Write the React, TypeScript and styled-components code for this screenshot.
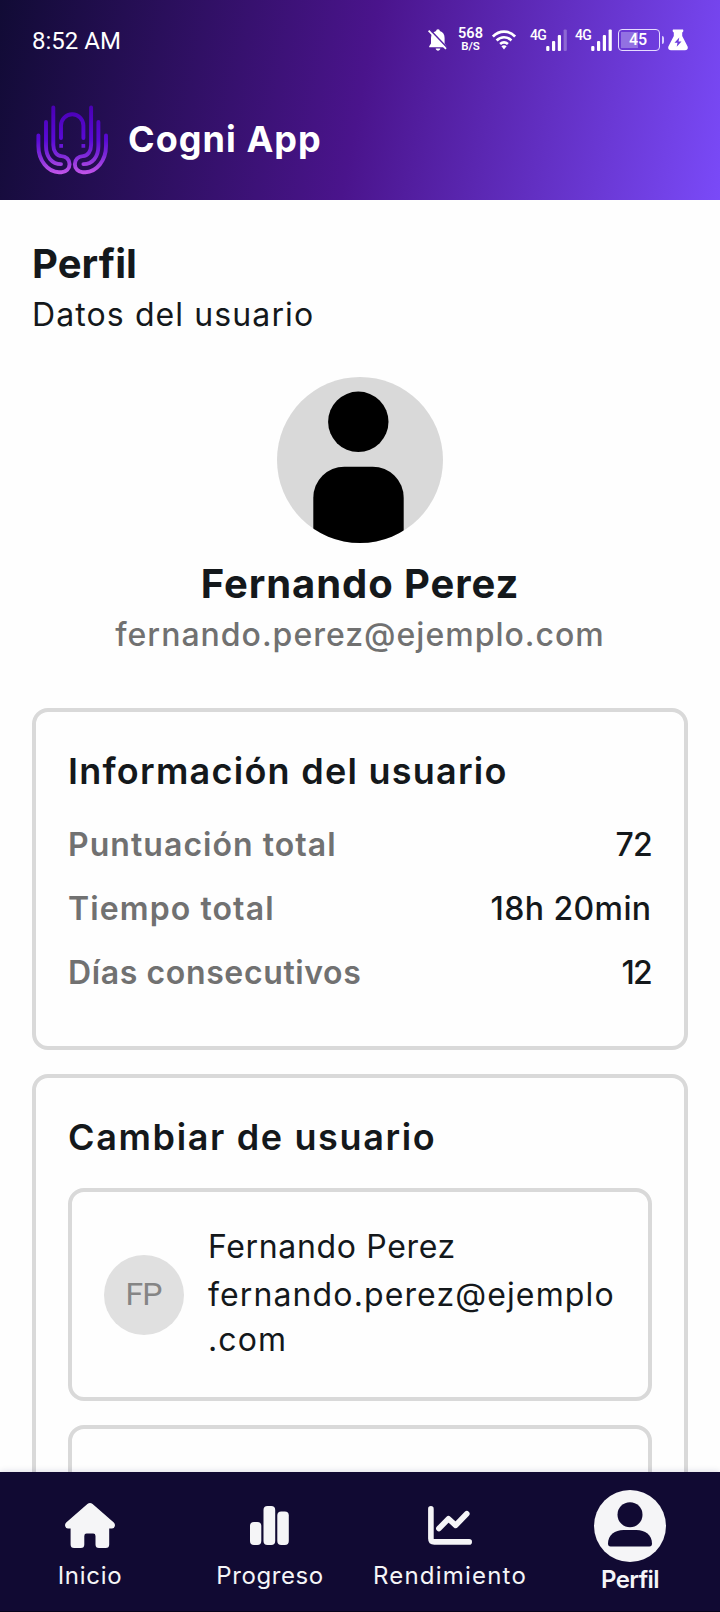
import React from 'react';
import styled, { createGlobalStyle } from 'styled-components';

const GlobalStyle = createGlobalStyle`
  * { box-sizing: border-box; }
  body {
    margin: 0;
    background: #fefefe;
    font-family: Inter, sans-serif;
    color: #14181b;
  }
  svg { display: block; flex: none; }
`;

const Screen = styled.div`
  display: flex;
  flex-direction: column;
  height: 100vh;
  overflow: hidden;
`;

const Header = styled.header`
  flex: none;
  height: 200px;
  background: linear-gradient(101deg, #110b35 0%, #4a148c 50%, #7a4af8 100%);
  color: #fff;
`;

const StatusBar = styled.div`
  display: flex;
  align-items: center;
  height: 80px;
  padding: 0 32px;
  font-family: Roboto, sans-serif;
`;

const Clock = styled.span`
  flex: 1;
  font-size: 24px;
  line-height: 28px;
  padding-top: 1px;
`;

const NetSpeed = styled.div`
  display: flex;
  flex-direction: column;
  width: 25px;
  margin: 0 9px 0 10px;
  text-align: center;
  font-weight: 600;
  font-size: 14.5px;
  line-height: 12px;
  padding-bottom: 1px;
`;

const NetUnit = styled.span`
  font-size: 11.5px;
  line-height: 12px;
`;

const Signal = styled.div<{ $gap: number }>`
  display: flex;
  width: 37px;
  height: 22px;
  margin-left: ${(p) => p.$gap}px;
  font-size: 14px;
  font-weight: 500;
  line-height: 12px;
  letter-spacing: -0.7px;

  span { width: 16px; }
`;

const Battery = styled.div`
  display: flex;
  align-items: center;
  margin: 0 4px 0 6px;
`;

const BatteryCase = styled.div`
  width: 42px;
  height: 22px;
  padding-right: 2px;
  border: 1.5px solid #e6dcff;
  border-radius: 4px;
  background: linear-gradient(#9271e2, #9271e2) 2px 2px / 17px 16px no-repeat;
  font-size: 16px;
  font-weight: 500;
  line-height: 20px;
  text-align: center;
`;

const BatteryNub = styled.div`
  width: 2px;
  height: 8px;
  margin-left: 2px;
  border-radius: 0 2px 2px 0;
  background: #d9ccff;
`;

const Brand = styled.div`
  display: flex;
  gap: 16px;
  padding: 20px 32px;
`;

const BrandName = styled.div`
  padding-top: 12px;
  font-size: 36px;
  line-height: 54px;
  font-weight: 700;
  letter-spacing: 1.04px;
`;

const Main = styled.main`
  flex: 1;
  min-height: 0;
  overflow: hidden;
  padding: 37px 32px 0;
`;

const Heading = styled.h1<{ $spacing: number }>`
  margin: 0;
  font-size: 40px;
  line-height: 54px;
  font-weight: 700;
  letter-spacing: ${(p) => p.$spacing}px;
`;

const Subtitle = styled.p`
  margin: 0;
  font-size: 32px;
  line-height: 48px;
  letter-spacing: 1.1px;
`;

const Identity = styled.section`
  display: flex;
  flex-direction: column;
  align-items: center;
  padding: 38px 0 49px;

  svg { margin-bottom: 14px; }
`;

const Email = styled.p`
  margin: 0;
  font-size: 32px;
  line-height: 48px;
  font-weight: 500;
  letter-spacing: 1px;
  color: #717171;
`;

const Card = styled.section`
  margin-bottom: 24px;
  padding: 32px 32px 41px;
  border: 4px solid #d9d9d9;
  border-radius: 16px;
`;

const CardTitle = styled.h2<{ $spacing: number; $below: number }>`
  margin: 0 0 ${(p) => p.$below}px;
  font-size: 36px;
  line-height: 54px;
  font-weight: 600;
  letter-spacing: ${(p) => p.$spacing}px;
`;

const StatRow = styled.div`
  display: flex;
  justify-content: space-between;
  align-items: center;
  height: 64px;
  font-size: 32px;
  line-height: 48px;
`;

const StatLabel = styled.span<{ $spacing: number }>`
  font-weight: 600;
  letter-spacing: ${(p) => p.$spacing}px;
  color: #717171;
`;

const StatValue = styled.span<{ $spacing: number; $shift: number }>`
  font-weight: 500;
  letter-spacing: ${(p) => p.$spacing}px;
  margin-right: ${(p) => p.$shift}px;
`;

const UserCard = styled.div`
  display: flex;
  align-items: center;
  gap: 24px;
  margin-bottom: 24px;
  padding: 32px;
  border: 4px solid #d9d9d9;
  border-radius: 16px;
  font-size: 32px;
`;

const Initials = styled.div`
  flex: none;
  width: 80px;
  height: 80px;
  padding-right: 1px;
  border-radius: 50%;
  background: #e0e0e0;
  color: #858585;
  font-family: Roboto, sans-serif;
  line-height: 78px;
  letter-spacing: -1px;
  text-align: center;
`;

const UserText = styled.div`
  flex: 1;
  min-width: 0;
  padding-bottom: 3px;
`;

const UserName = styled.div<{ $spacing: number; $line: number }>`
  line-height: ${(p) => p.$line}px;
  margin-bottom: 2px;
  letter-spacing: ${(p) => p.$spacing}px;
`;

const UserEmail = styled.div`
  line-height: 45px;
  letter-spacing: 1.12px;
  overflow-wrap: anywhere;
`;

const Nav = styled.nav`
  position: relative;
  flex: none;
  display: flex;
  align-items: center;
  height: 140px;
  padding: 18px 0 13px;
  background: #110a33;
  border-bottom: 1px solid #06031c;
  box-shadow: 0 -1px 6px rgba(17, 10, 80, 0.12);
  color: #f5f5f7;
`;

const NavItem = styled.a<{ $spacing: number; $active?: boolean }>`
  flex: 1;
  display: flex;
  flex-direction: column;
  align-items: center;
  font-size: 24px;
  line-height: 36px;
  font-weight: ${(p) => (p.$active ? 600 : 400)};
  letter-spacing: ${(p) => p.$spacing}px;

  svg { margin: ${(p) => (p.$active ? 0 : 8)}px 0; }
`;

const Logo = () => (
  <svg width="80" height="80" viewBox="0 0 80 80" fill="none" stroke="url(#logo)" strokeWidth="3.9" strokeLinecap="round">
    <defs>
      <linearGradient id="logo" gradientUnits="userSpaceOnUse" x1="0" y1="6" x2="0" y2="74">
        <stop offset="0" stopColor="#4a00b4" />
        <stop offset="0.5" stopColor="#5a0ad6" />
        <stop offset="0.72" stopColor="#7c28d8" />
        <stop offset="1" stopColor="#c355ea" />
      </linearGradient>
    </defs>
    <path d="M6.400 35.500V46C6.400 60.500 16 72.200 27 72.200H29.500A8 8 0 0 0 29.500 56.100C24.800 56.100 21.300 51 21.300 45V7.500" />
    <path d="M14 22V46C14 57 20 64.100 29 64.100" />
    <path d="M74 35.500V46C74 60.500 64.400 72.200 53.400 72.200H50.900A8 8 0 0 1 50.900 56.100C55.600 56.100 59.100 51 59.100 45V7.500" />
    <path d="M66.400 22V46C66.400 57 60.400 64.100 51.400 64.100" />
    <path d="M29 38V25.500A11.200 11.200 0 0 1 51.400 25.500V38" />
    <path d="M27.300 45.900H31M49.500 45.900H53.200" strokeLinecap="butt" />
  </svg>
);

const MutedBell = () => (
  <svg width="20" height="24" viewBox="0 0 20 24" fill="#fff">
    <path d="M10 1.200C11.200 1.200 11.800 2 11.800 3C15 3.800 16.600 6.500 16.600 10V15.500L18.500 18.300V19.300H1.200V18.300L3 15.500V10C3 6.500 5 3.800 8.200 3C8.200 2 8.800 1.200 10 1.200Z" />
    <path d="M7.700 20.600H12.300C12 23.400 8 23.400 7.700 20.600Z" />
    <path d="M1.800 1.600L19 19.500" stroke="#5522a8" strokeWidth="1.700" />
    <path d="M.6 2.600L18 20.800" stroke="#fff" strokeWidth="1.800" />
  </svg>
);

const Wifi = () => (
  <svg width="24" height="22" viewBox="0 0 24 22" fill="none" stroke="#fff" strokeWidth="2.700">
    <path d="M.9 7.500C7.300 .9 16.700 .9 23.100 7.500" />
    <path d="M4.600 11.400C9 7.200 15 7.200 19.400 11.400" />
    <path d="M8.100 15C10.500 12.900 13.500 12.900 15.900 15" />
    <path d="M9.400 17.200Q12 15.400 14.600 17.200L12 20.500Z" fill="#fff" stroke="none" />
  </svg>
);

const SignalBars = ({ level }: { level: number }) => (
  <svg width="21" height="22" viewBox="0 0 21 22">
    {[5, 10, 16, 21.5].map((h, i) => (
      <rect key={h} x={0.2 + i * 5.8} y={22 - h} width="3.200" height={h} rx="1.100" fill="#fff" opacity={i < level ? 1 : 0.28} />
    ))}
  </svg>
);

const Flask = () => (
  <svg width="20" height="22" viewBox="0 0 20 22">
    <path d="M5 .5H15Q16 2.500 14.200 3.500V7L19.600 17.500Q20.600 21 17 21.300H3Q-.6 21 .4 17.500L5.800 7V3.500Q4 2.500 5 .5Z" fill="#fff" />
    <path d="M11.300 8.500L6.500 13.800H9.500L8.700 17.800L13.500 12.500H10.500Z" fill="#6a3bdc" />
  </svg>
);

const Portrait = () => (
  <svg width="166" height="166" viewBox="0 0 166 166">
    <defs>
      <clipPath id="portrait"><circle cx="83" cy="83" r="83" /></clipPath>
    </defs>
    <g clipPath="url(#portrait)">
      <rect width="166" height="166" fill="#d9d9d9" />
      <circle cx="81.300" cy="44.800" r="30.200" />
      <rect x="36.300" y="89.700" width="90.400" height="110" rx="31" />
    </g>
  </svg>
);

const HomeIcon = () => (
  <svg width="52" height="48" viewBox="0 0 52 48" fill="#f5f5f7">
    <path d="M23.400 2Q26 .1 28.600 2L49.800 20.400Q51.400 22 50.800 24.200Q50.200 26.400 48 26.400H45.200V42.500Q45.200 46 41.700 46H35Q31.500 46 31.500 42.500V34Q31.500 31.600 29.200 31.600H22.600Q20.300 31.600 20.300 34V42.500Q20.300 46 16.800 46H10.100Q6.600 46 6.600 42.500V26.400H4Q1.800 26.400 1.200 24.200Q.6 22 2.200 20.400Z" />
  </svg>
);

const BarsIcon = () => (
  <svg width="52" height="48" viewBox="0 0 52 48" fill="#f5f5f7">
    <rect x="6" y="20" width="11.300" height="23" rx="4" />
    <rect x="19.500" y="4" width="11.700" height="39" rx="4" />
    <rect x="33.300" y="9.500" width="11.500" height="33.500" rx="4" />
  </svg>
);

const TrendIcon = () => (
  <svg width="52" height="48" viewBox="0 0 52 48" fill="none" stroke="#f5f5f7" strokeWidth="5.600" strokeLinecap="round" strokeLinejoin="round">
    <path d="M6.900 6.900V36.500Q6.900 39.900 10.300 39.900H45.200" />
    <path d="M14.900 26.500L24.500 16.800L31.700 23.300L42.800 11.800" />
  </svg>
);

const PersonIcon = () => (
  <svg width="72" height="72" viewBox="0 0 72 72">
    <circle cx="36" cy="36" r="36" fill="#f5f5f7" />
    <g fill="#110a33">
      <circle cx="36" cy="24.700" r="12.500" />
      <path d="M14 53.500C14 45 21 40 29.500 40H42.500C51 40 58 45 58 53.500Q58 56.400 55.500 56.400H16.500Q14 56.400 14 53.500Z" />
    </g>
  </svg>
);

const stats = [
  { label: 'Puntuación total', value: '72', labelSpacing: 1.05, valueSpacing: -0.8, shift: 0 },
  { label: 'Tiempo total', value: '18h 20min', labelSpacing: 1.1, valueSpacing: 0.4, shift: 0.5 },
  { label: 'Días consecutivos', value: '12', labelSpacing: 0.62, valueSpacing: -1.8, shift: 1 },
];

const users = [
  { initials: 'FP', name: 'Fernando Perez', email: 'fernando.perez@ejemplo.com', spacing: 0.65, line: 46 },
  { initials: 'AG', name: 'Ana García', email: 'ana.garcia.lopez@ejemplo.com', spacing: 1.5, line: 49 },
];

export default function App() {
  return (
    <Screen>
      <GlobalStyle />
      <Header>
        <StatusBar>
          <Clock>8:52 AM</Clock>
          <MutedBell />
          <NetSpeed><span>568</span><NetUnit>B/S</NetUnit></NetSpeed>
          <Wifi />
          <Signal $gap={14}><span>4G</span><SignalBars level={3} /></Signal>
          <Signal $gap={8}><span>4G</span><SignalBars level={4} /></Signal>
          <Battery><BatteryCase>45</BatteryCase><BatteryNub /></Battery>
          <Flask />
        </StatusBar>
        <Brand>
          <Logo />
          <BrandName>Cogni App</BrandName>
        </Brand>
      </Header>

      <Main>
        <Heading $spacing={0.1}>Perfil</Heading>
        <Subtitle>Datos del usuario</Subtitle>

        <Identity>
          <Portrait />
          <Heading as="h2" $spacing={0.92}>Fernando Perez</Heading>
          <Email>fernando.perez@ejemplo.com</Email>
        </Identity>

        <Card>
          <CardTitle $spacing={1.25} $below={15}>Información del usuario</CardTitle>
          {stats.map((s) => (
            <StatRow key={s.label}>
              <StatLabel $spacing={s.labelSpacing}>{s.label}</StatLabel>
              <StatValue $spacing={s.valueSpacing} $shift={s.shift}>{s.value}</StatValue>
            </StatRow>
          ))}
        </Card>

        <Card>
          <CardTitle $spacing={1.64} $below={24}>Cambiar de usuario</CardTitle>
          {users.map((u) => (
            <UserCard key={u.initials}>
              <Initials>{u.initials}</Initials>
              <UserText>
                <UserName $spacing={u.spacing} $line={u.line}>{u.name}</UserName>
                <UserEmail>{u.email}</UserEmail>
              </UserText>
            </UserCard>
          ))}
        </Card>
      </Main>

      <Nav>
        <NavItem $spacing={0.7}><HomeIcon />Inicio</NavItem>
        <NavItem $spacing={0.58}><BarsIcon />Progreso</NavItem>
        <NavItem $spacing={1.2}><TrendIcon />Rendimiento</NavItem>
        <NavItem $spacing={-0.6} $active><PersonIcon />Perfil</NavItem>
      </Nav>
    </Screen>
  );
}
